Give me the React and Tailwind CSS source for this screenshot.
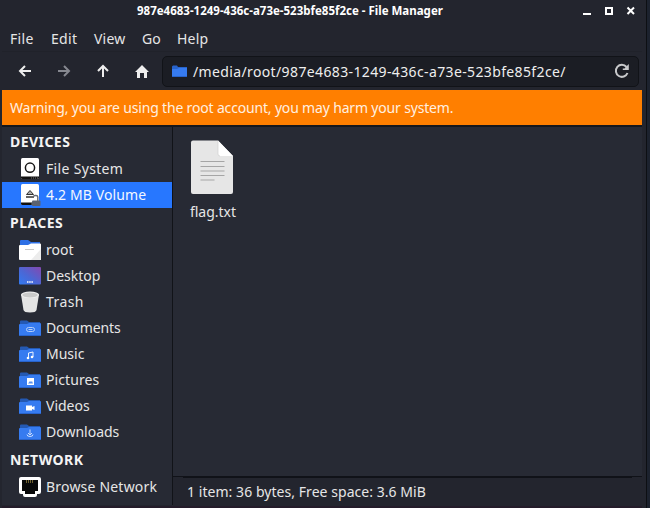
import React from "react";

function Folder({ children }) {
  return (
    <svg width="22" height="16" viewBox="0 0 22 16" className="block">
      <path d="M1 1.5Q1 .5 2 .5H8L10 2H21V5H1Z" fill="#2459b3" />
      <path d="M0 5Q0 4 1 4H8L10 3H21Q22 3 22 4V15Q22 16 21 16H1Q0 16 0 15Z" fill="#367bf0" />
      <path d="M.5 15.5H21.5" stroke="#2863cb" />
      {children}
    </svg>
  );
}

function Drive({ mounted }) {
  return (
    <svg width="22" height="22" viewBox="0 0 22 22" className="block">
      <rect x="2" y="0" width="18" height="21" rx="1.5" fill="#fff" />
      <path d="M2 18.5H20V20Q20 21 18.5 21H3.5Q2 21 2 20Z" fill="#111" />
      <path d="M12 20H19" stroke="#777" strokeDasharray="1 1" />
      {mounted ? (
        <>
          <path d="M7.5 10.5L11 6.5L14.5 10.5Z" fill="#aaa" stroke="#333" />
          <path d="M7 13H15" stroke="#333" strokeWidth="1.5" />
          <path d="M14.5 12.5Q14.8 11.5 16 11.5H17Q18.8 11.5 18.8 13V17" fill="none" stroke="#666b75" strokeWidth="1.4" />
          <rect x="13" y="16.5" width="8.5" height="5.5" rx="1" fill="#5b6270" />
        </>
      ) : (
        <circle cx="11" cy="9.7" r="4.6" fill="none" stroke="#151515" strokeWidth="1.5" />
      )}
    </svg>
  );
}

function Home() {
  return (
    <svg width="22" height="20" viewBox="0 0 22 20" className="block">
      <path d="M1 1Q1 0 2 0H9L12 2H21V8H1Z" fill="#2e70e5" />
      <path d="M0 6Q0 5 1 5H9L12 3.5H21Q22 3.5 22 4.5V19Q22 20 21 20H1Q0 20 0 19Z" fill="#fff" />
      <path d="M12 20L22 9V20Z" fill="#ececec" />
      <path d="M6 9.5H15" stroke="#c8c8c8" />
    </svg>
  );
}

function Desktop() {
  return (
    <svg width="22" height="18" viewBox="0 0 22 18" className="block">
      <defs>
        <linearGradient id="desk" x1="0" y1="1" x2="1" y2="0">
          <stop stopColor="#327af1" />
          <stop offset=".45" stopColor="#4b67d5" />
          <stop offset="1" stopColor="#8448b0" />
        </linearGradient>
      </defs>
      <rect width="22" height="17.5" rx="1" fill="url(#desk)" />
      <path d="M8 15H14" stroke="#fff" strokeWidth="1.5" strokeDasharray="1.5 .7" />
    </svg>
  );
}

function Trash() {
  return (
    <svg width="22" height="22" viewBox="0 0 22 22" className="block">
      <path d="M2 3.5L4.5 19Q5 21.5 11 21.5T17.5 19L20 3.5Z" fill="#e4e4e4" />
      <ellipse cx="11" cy="3.8" rx="9" ry="3.3" fill="#f0f0f0" />
      <ellipse cx="11" cy="4" rx="7.7" ry="2.4" fill="#cacaca" />
    </svg>
  );
}

function Network() {
  return (
    <svg width="22" height="20" viewBox="0 0 22 20" className="block">
      <path d="M2 0H20Q22 0 22 2V15Q22 17 20 17H18V18Q18 20 16 20H6Q4 20 4 18V17H2Q0 17 0 15V2Q0 0 2 0Z" fill="#fff" />
      <path d="M3 3H19V14H16V17H6V14H3Z" fill="#080808" />
      <path d="M7.5 3V6M9.5 3V6M11.5 3V6M13.5 3V6" stroke="#6f6130" />
    </svg>
  );
}

function Heading({ children, className }) {
  return <div className={`flex items-center pl-2 text-[14px] font-bold tracking-[0.45px] text-[#f4f4f4] ${className}`}>{children}</div>;
}

function Row({ icon, label, className = "", text = "" }) {
  return (
    <div className={`flex h-[26px] items-center ${className}`}>
      <span className="ml-[17px] flex w-[22px] shrink-0 justify-center">{icon}</span>
      <span className={`ml-[5px] ${text}`}>{label}</span>
    </div>
  );
}

export default function App() {
  return (
    <div className="flex h-[508px] w-[650px] overflow-hidden bg-[#23252e] font-['Noto_Sans',sans-serif] text-[14px] leading-[20px] whitespace-nowrap text-[#e6e6e6]">
      <div className="flex w-[644px] shrink-0 flex-col pl-[2px] pr-[2px]">
        <header className="flex h-[24px] shrink-0 items-center">
          <span className="ml-[135px] w-[306px] pb-[2px] text-[11.5px] font-bold text-white">987e4683-1249-436c-a73e-523bfe85f2ce - File Manager</span>
          <svg width="54" height="12" viewBox="0 0 54 12" className="ml-[138px] block">
            <g stroke="#fff" fill="none">
              <path d="M2 8H10" strokeWidth="2" />
              <rect x="25" y="2" width="6" height="6" strokeWidth="2" />
              <path d="M46.5 1.5L53 8M53 1.5L46.5 8" strokeWidth="2" />
            </g>
          </svg>
        </header>
        <nav className="flex h-[28px] shrink-0 items-center border-b border-[#20222a] pl-2 pt-[2px]">
          <span className="w-[41px] tracking-[0.3px]">File</span>
          <span className="w-[43px] tracking-[0.3px]">Edit</span>
          <span className="w-[48px] tracking-[0.2px]">View</span>
          <span className="w-[35px]">Go</span>
          <span className="tracking-[0.2px]">Help</span>
        </nav>
        <div className="flex h-[38px] shrink-0 items-center">
          <svg width="160" height="38" viewBox="0 0 160 38" className="block shrink-0">
            <g fill="none" stroke="#eee" strokeWidth="2">
              <path d="M29 19H18M23 14L18 19L23 24" />
              <path d="M56 19H67M62 14L67 19L62 24" stroke="#868890" />
              <path d="M101 25V14M96 19L101 14L106 19" />
            </g>
            <path d="M140 13L147 20H145V26H142V21H138V26H135V20H133Z" fill="#eee" />
          </svg>
          <div className="flex h-[31px] w-[477px] items-center rounded-[5px] border border-[#111318] bg-[#1b1d24] pl-[9px] pr-[8px]">
            <svg width="15" height="12" viewBox="0 0 15 12" className="block shrink-0">
              <path d="M0 1.5L1 .5H5L6 2H15V12H0Z" fill="#2864cc" />
              <path d="M0 4H5L7 3H15V11H0Z" fill="#367bf0" />
            </svg>
            <span className="ml-[6px] grow pt-px tracking-[0.37px] text-[#eee]">/media/root/987e4683-1249-436c-a73e-523bfe85f2ce/</span>
            <svg width="16" height="16" viewBox="0 0 16 16" className="block shrink-0">
              <path d="M13.5 10A6 6 0 1 1 12.5 4" fill="none" stroke="#c8c9cb" strokeWidth="2" />
              <path d="M14.8 1V7H8.8V5.6H10.5Z" fill="#c8c9cb" />
            </svg>
          </div>
        </div>
        <div className="flex h-[35px] shrink-0 items-center bg-[#ff7f00] pl-2 tracking-[-0.17px] text-[#fff0e0]">Warning, you are using the root account, you may harm your system.</div>
        <main className="flex h-[380px] shrink-0 border-t-2 border-[#15171c]">
          <aside className="flex w-[171px] shrink-0 flex-col border-r border-[#111318] bg-[#272a34] pt-[2px]">
            <Heading className="h-[27px] pb-[2px]">DEVICES</Heading>
            <Row icon={<Drive />} label="File System" text="tracking-[0.33px]" />
            <Row icon={<Drive mounted />} label="4.2 MB Volume" text="tracking-[0.12px]" className="bg-[#2777ff] text-[#f4f7ff]" />
            <Heading className="h-[29px]">PLACES</Heading>
            <Row icon={<Home />} label="root" />
            <Row icon={<Desktop />} label="Desktop" />
            <Row icon={<Trash />} label="Trash" text="tracking-[0.4px]" />
            <Row label="Documents" text="tracking-[-0.1px]" icon={<Folder><g fill="none" stroke="#b4cffb"><rect x="7.5" y="7.5" width="8" height="4" rx="2" /><path d="M9.5 9.5H13.5" /></g></Folder>} />
            <Row label="Music" icon={<Folder><path d="M9.5 12V7L14 6V11" fill="none" stroke="#e9f1ff" /><circle cx="9" cy="12" r="1.3" fill="#fff" /><circle cx="13" cy="11" r="1.3" fill="#fff" /></Folder>} />
            <Row label="Pictures" text="tracking-[0.1px]" icon={<Folder><rect x="8" y="6" width="7" height="7" fill="#fff" /><path d="M9 11.5L11 9L12 10L13 9L14 11.5Z" fill="#5a91ee" /></Folder>} />
            <Row label="Videos" icon={<Folder><path d="M7 7.5H13V9L15.5 8V12L13 11V12.5H7Z" fill="#fff" /></Folder>} />
            <Row label="Downloads" icon={<Folder><path d="M11 5.5V11M9 9L11 11L13 9M8 10.5Q8 12.5 11 12.5T14 10.5" fill="none" stroke="#c9dcfd" /></Folder>} />
            <Heading className="h-[29px]">NETWORK</Heading>
            <Row icon={<Network />} label="Browse Network" text="tracking-[0.2px]" />
          </aside>
          <section className="flex grow flex-col">
            <div className="h-[349px] shrink-0 bg-[#272a34] pt-[13px]">
              <div className="ml-[17px] flex w-[46px] flex-col items-center">
                <svg width="44" height="56" viewBox="0 0 44 56" className="mr-[2px] block">
                  <path d="M3 .5H28L43 16V52Q43 54 41 54H3Q1 54 1 52V2.5Q1 .5 3 .5Z" fill="#e6e6e6" />
                  <path d="M28 .5L43 16H30Q28 16 28 14Z" fill="#fff" />
                  <path d="M28 1V14Q28 16 30 16" fill="none" stroke="#d0d0d0" strokeWidth=".7" />
                  <path d="M10.5 21.5H34.5M10.5 26.5H34.5M10.5 31H34.5M10.5 35.5H34.5M10.5 40H24.5" stroke="#a5a5a5" strokeWidth="1.2" />
                </svg>
                <span className="mt-[6px]">flag.txt</span>
              </div>
            </div>
            <div className="h-px w-full shrink-0 bg-[#101218]" />
            <div className="ml-[10px] h-px w-[449px] shrink-0 self-start bg-[#101218]" />
            <footer className="flex grow items-center pl-[14px] tracking-[0.05px]">1 item: 36 bytes, Free space: 3.6 MiB</footer>
          </section>
        </main>
        <div className="mt-auto h-[2px] bg-[#241c2a]" />
      </div>
      <div className="w-[2px] shrink-0" />
      <div className="w-px shrink-0 bg-[#0d0f13]" />
      <div className="grow bg-[#1c222e]" />
    </div>
  );
}
